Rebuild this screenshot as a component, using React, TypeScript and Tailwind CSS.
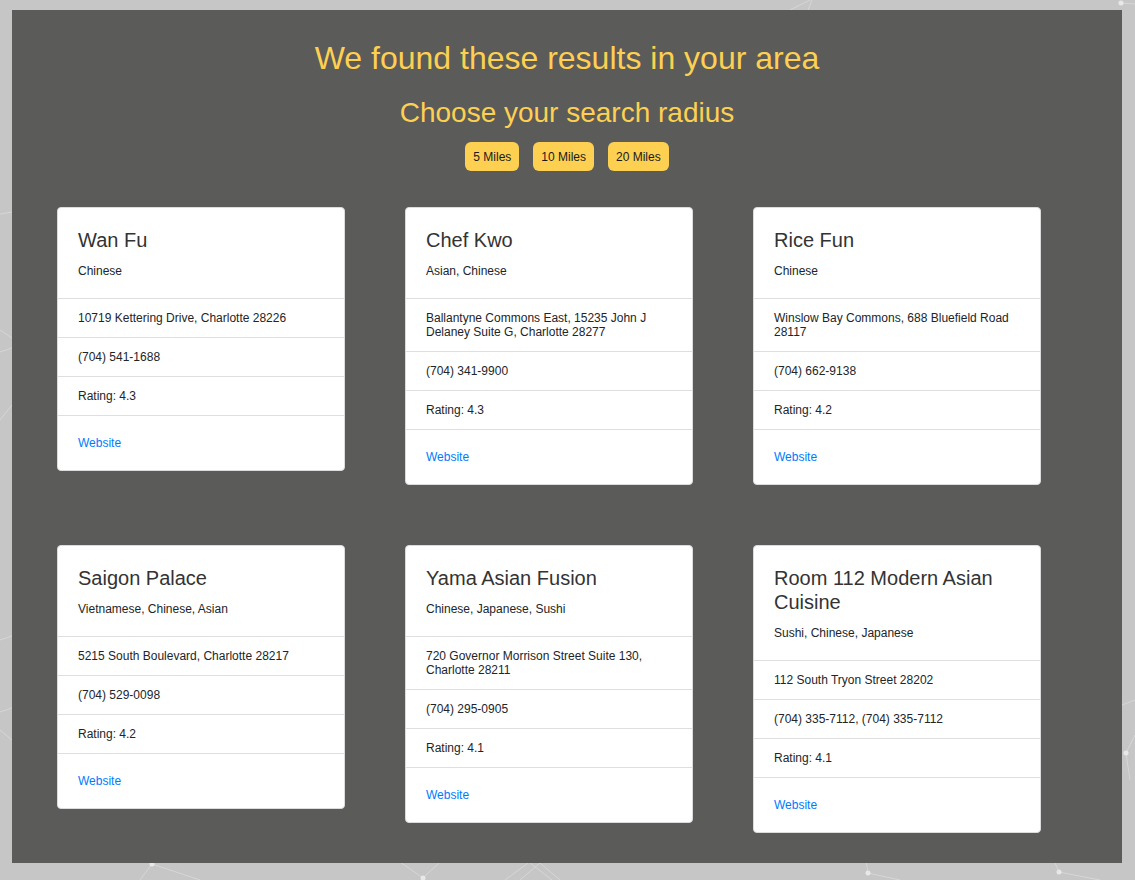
import React from "react";

type R = { name: string; cats: string; addr: string; phone: string; rating: string };

const rows: R[][] = [
  [
    { name: "Wan Fu", cats: "Chinese", addr: "10719 Kettering Drive, Charlotte 28226", phone: "(704) 541-1688", rating: "4.3" },
    { name: "Chef Kwo", cats: "Asian, Chinese", addr: "Ballantyne Commons East, 15235 John J Delaney Suite G, Charlotte 28277", phone: "(704) 341-9900", rating: "4.3" },
    { name: "Rice Fun", cats: "Chinese", addr: "Winslow Bay Commons, 688 Bluefield Road 28117", phone: "(704) 662-9138", rating: "4.2" },
  ],
  [
    { name: "Saigon Palace", cats: "Vietnamese, Chinese, Asian", addr: "5215 South Boulevard, Charlotte 28217", phone: "(704) 529-0098", rating: "4.2" },
    { name: "Yama Asian Fusion", cats: "Chinese, Japanese, Sushi", addr: "720 Governor Morrison Street Suite 130, Charlotte 28211", phone: "(704) 295-0905", rating: "4.1" },
    { name: "Room 112 Modern Asian Cuisine", cats: "Sushi, Chinese, Japanese", addr: "112 South Tryon Street 28202", phone: "(704) 335-7112, (704) 335-7112", rating: "4.1" },
  ],
];

function Card({ r }: { r: R }) {
  return (
    <div className="w-[288px] bg-white border border-[#dcdcdc] rounded-[4px] text-[#212529] text-[12px] leading-[14px]">
      <div className="px-[20px] py-[20px]">
        <div className="text-[20px] leading-[24px] text-[#333333] mb-[12px]">{r.name}</div>
        <div>{r.cats}</div>
      </div>
      <div className="border-t border-[#dfdfdf] px-[20px] py-[12px]">{r.addr}</div>
      <div className="border-t border-[#dfdfdf] px-[20px] py-[12px]">{r.phone}</div>
      <div className="border-t border-[#dfdfdf] px-[20px] py-[12px]">Rating: {r.rating}</div>
      <div className="border-t border-[#dfdfdf] px-[20px] py-[20px]">
        <a href="#" className="text-[#007bff]">Website</a>
      </div>
    </div>
  );
}

function Network() {
  const lines: [number, number, number, number][] = [
    [0, 214, 12, 212],
    [0, 330, 12, 338],
    [0, 352, 12, 348],
    [0, 420, 12, 405],
    [0, 640, 12, 636],
    [0, 712, 12, 708],
    [0, 730, 12, 740],
    [140, 880, 152, 864],
    [152, 864, 200, 880],
    [400, 862, 423, 878],
    [423, 878, 440, 862],
    [505, 880, 528, 863],
    [520, 880, 540, 863],
    [530, 863, 552, 880],
    [540, 863, 560, 880],
    [868, 873, 900, 880],
    [866, 860, 868, 873],
    [1059, 872, 1100, 880],
    [1055, 863, 1059, 872],
    [1122, 705, 1135, 700],
    [1126, 753, 1135, 735],
    [1126, 753, 1130, 780],
    [1121, 3, 1135, 4],
    [790, 10, 810, 0],
    [808, 10, 812, 0],
  ];
  const dots: [number, number][] = [
    [152, 864],
    [423, 878],
    [868, 873],
    [1059, 872],
    [1126, 753],
    [1121, 3],
  ];
  return (
    <svg className="absolute inset-0 w-full h-full" width="1135" height="880" viewBox="0 0 1135 880">
      {lines.map(([a, b, c, d], i) => (
        <line key={i} x1={a} y1={b} x2={c} y2={d} stroke="#e2e2e2" strokeWidth="1" opacity="0.6" />
      ))}
      {dots.map(([x, y], i) => (
        <circle key={i} cx={x} cy={y} r="2.5" fill="#e8e8e8" />
      ))}
    </svg>
  );
}

export default function App() {
  return (
    <div
      className="relative w-full min-h-[880px] bg-[#c6c6c6] pt-[10px] pl-[12px] pr-[13px] pb-[17px]"
      style={{ fontFamily: '"Liberation Sans", Arial, sans-serif' }}
    >
      <Network />
      <div className="relative bg-[#5b5b59] pt-[30px] pb-[30px]">
        <h1 className="text-center text-[32px] leading-[37px] text-[#fdd052]">We found these results in your area</h1>
        <h2 className="mt-[19px] text-center text-[28px] leading-[34px] text-[#fdd052]">Choose your search radius</h2>
        <div className="mt-[12px] flex justify-center gap-[14px]">
          {["5 Miles", "10 Miles", "20 Miles"].map((t) => (
            <button
              key={t}
              className="h-[29px] px-[8px] rounded-[6px] bg-[#fdd052] text-[12px] leading-[14px] text-[#1a1a1a]"
            >
              {t}
            </button>
          ))}
        </div>
        <div className="mt-[36px] pl-[45px] flex flex-col gap-[60px]">
          {rows.map((row, i) => (
            <div key={i} className="flex items-start gap-[60px]">
              {row.map((r) => (
                <Card key={r.name} r={r} />
              ))}
            </div>
          ))}
        </div>
      </div>
    </div>
  );
}
